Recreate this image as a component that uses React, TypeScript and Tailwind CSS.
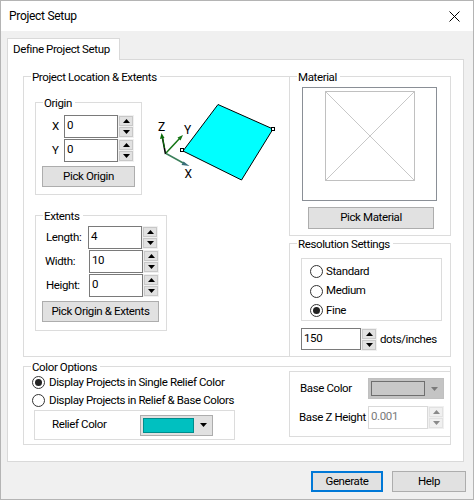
import React from "react";

function Group({
  label,
  className,
  children,
}: {
  label: string;
  className: string;
  children?: React.ReactNode;
}) {
  return (
    <div className={`relative border-[#dcdcdc] ${className}`}>
      <span className="absolute top-[-8px] left-[7px] bg-white pl-[1px] pr-[3px] leading-[16px] whitespace-nowrap">
        {label}
      </span>
      {children}
    </div>
  );
}

function Arrow({ dir = "up", color = "#000" }: { dir?: "up" | "down"; color?: string }) {
  return (
    <svg width="7" height="4" viewBox="0 0 7 4" className="block">
      <polygon points={dir === "up" ? "3.5,0 7,4 0,4" : "0,0 7,0 3.5,4"} fill={color} />
    </svg>
  );
}

function Spin({ disabled = false }: { disabled?: boolean }) {
  const color = disabled ? "#8a8a8a" : "#000";
  const cls = disabled
    ? "flex h-[10px] w-[14px] items-center justify-center border border-[#e2e2e2] bg-[#f0f0f0]"
    : "flex h-[10px] w-[14px] items-center justify-center border border-[#c8c8c8] bg-[#e1e1e1]";
  return (
    <div className="flex flex-col gap-[1px] bg-[#f0f0f0] p-[1px]">
      <div className={cls}>
        <Arrow dir="up" color={color} />
      </div>
      <div className={cls}>
        <Arrow dir="down" color={color} />
      </div>
    </div>
  );
}

function Field({
  value,
  className,
  disabled = false,
}: {
  value: string;
  className: string;
  disabled?: boolean;
}) {
  return (
    <div
      className={`border pl-[2px] leading-[18px] ${
        disabled ? "border-[#d9d9d9] text-[#7a7a7a]" : "border-[#7a7a7a]"
      } ${className}`}
    >
      {value}
    </div>
  );
}

function Btn({ label, className }: { label: string; className: string }) {
  return (
    <div
      className={`flex h-[21px] items-center justify-center border border-[#adadad] bg-[#e1e1e1] ${className}`}
    >
      {label}
    </div>
  );
}

function Radio({ checked = false }: { checked?: boolean }) {
  return (
    <span className="flex h-[13px] w-[13px] shrink-0 items-center justify-center rounded-full border border-[#333] bg-white">
      {checked && <span className="h-[7px] w-[7px] rounded-full bg-[#222]" />}
    </span>
  );
}

function Swatch({
  color,
  edge,
  className,
  arrow,
  inner,
}: {
  color: string;
  edge: string;
  className: string;
  arrow: string;
  inner: string;
}) {
  return (
    <div className={`flex h-[21px] items-center border border-[#adadad] pl-[2px] ${className}`}>
      <div className={`h-[15px] border ${inner}`} style={{ backgroundColor: color, borderColor: edge }} />
      <div className="flex flex-1 justify-center">
        <Arrow dir="down" color={arrow} />
      </div>
    </div>
  );
}

function Axes() {
  return (
    <svg width="130" height="92" viewBox="150 100 130 92" className="absolute left-[126px] top-[23px]">
      <polygon points="183,151 218,104.5 273,129 241.5,180" fill="#00ffff" stroke="#000" strokeWidth="1" />
      <rect x="180.5" y="148.5" width="3" height="3" fill="#fff" stroke="#000" />
      <rect x="271.5" y="127.5" width="3" height="3" fill="#fff" stroke="#000" />
      <g fill="none">
        <path d="M165.5 154 L162.5 138" stroke="#000" strokeWidth="1.5" />
        <path d="M164.5 148 L162.5 138" stroke="#0a7a0a" strokeWidth="1" />
        <path d="M166 153 L180 138" stroke="#157515" strokeWidth="1.5" />
        <path d="M166 153.5 L185 164" stroke="#3a7f5a" strokeWidth="1.5" />
      </g>
      <polygon points="161.5,133 160,139 164.5,138" fill="#0a6a0a" />
      <polygon points="183,135 177.5,137.5 180.5,140.5" fill="#157515" />
      <polygon points="189.5,166 183.5,161.5 181.5,165" fill="#3a6f7a" />
      <text x="158" y="131" fontSize="12" fontFamily="Roboto, sans-serif">Z</text>
      <text x="184" y="134" fontSize="12" fontFamily="Roboto, sans-serif">Y</text>
      <text x="184.5" y="178" fontSize="12" fontFamily="Roboto, sans-serif">X</text>
    </svg>
  );
}

function MaterialPreview() {
  return (
    <svg width="90" height="90" viewBox="0 0 90 90" className="block">
      <rect x="0.5" y="0.5" width="89" height="89" fill="#fff" stroke="#c0c0c0" />
      <path d="M0.5 0.5 L89.5 89.5 M89.5 0.5 L0.5 89.5" stroke="#c8c8c8" fill="none" />
    </svg>
  );
}

export default function App() {
  return (
    <div className="flex h-[500px] w-[474px] flex-col border border-[#b4b4b4] bg-[#f0f0f0] font-['Roboto',sans-serif] text-[11.5px] tracking-[-0.38px] text-black">
      <div className="flex h-[30px] items-center justify-between bg-white pl-[8px] pr-[13px] text-[12px] tracking-[-0.3px]">
        <span>Project Setup</span>
        <svg width="11" height="11" viewBox="0 0 11 11">
          <path d="M0.5 0.5 L10.5 10.5 M10.5 0.5 L0.5 10.5" stroke="#000" fill="none" />
        </svg>
      </div>

      <div className="pl-[6px] pt-[7px]">
        <div className="relative z-10 -mb-px flex h-[22px] w-[113px] items-center whitespace-nowrap border border-b-0 border-[#d9d9d9] bg-white pl-[5px]">
          Define Project Setup
        </div>
        <div className="h-[403px] w-[457px] border border-[#d9d9d9] bg-white pl-[15px] pt-[16px]">
          <div className="flex">
            <Group
              label="Project Location & Extents"
              className="h-[281px] w-[266px] border-b border-l border-t pl-[11px] pt-[25px]"
            >
              <Group label="Origin" className="h-[93px] w-[107px] border pl-[6px] pt-[12px]">
                <div className="flex items-center">
                  <span className="w-[22px] pl-[10px]">X</span>
                  <Field value="0" className="h-[23px] w-[54px]" />
                  <Spin />
                </div>
                <div className="mt-px flex items-center">
                  <span className="w-[22px] pl-[10px]">Y</span>
                  <Field value="0" className="h-[23px] w-[54px]" />
                  <Spin />
                </div>
                <Btn label="Pick Origin" className="mt-[4px] w-[93px]" />
              </Group>
              <Axes />
              <Group label="Extents" className="mt-[20px] h-[116px] w-[132px] border pl-[6px] pt-[10px]">
                <div className="flex items-center">
                  <span className="w-[46px] pl-[4px]">Length:</span>
                  <Field value="4" className="h-[23px] w-[54px]" />
                  <Spin />
                </div>
                <div className="mt-px flex items-center">
                  <span className="w-[47px] pl-[3px]">Width:</span>
                  <Field value="10" className="h-[23px] w-[54px]" />
                  <Spin />
                </div>
                <div className="mt-px flex items-center">
                  <span className="w-[47px] pl-[4px]">Height:</span>
                  <Field value="0" className="h-[23px] w-[54px]" />
                  <Spin />
                </div>
                <Btn label="Pick Origin & Extents" className="mt-[4px] w-[117px]" />
              </Group>
            </Group>

            <div className="flex w-[162px] flex-col">
              <Group label="Material" className="h-[160px] border pl-[12px] pt-[10px]">
                <div className="flex h-[114px] w-[135px] items-start justify-center border border-[#8a8f96] pt-[3px]">
                  <MaterialPreview />
                </div>
                <Btn label="Pick Material" className="ml-[6px] mt-[6px] h-[22px] w-[126px]" />
              </Group>
              <Group label="Resolution Settings" className="mt-[7px] h-[114px] border pl-[11px] pt-[14px]">
                <div className="flex h-[63px] w-[141px] flex-col gap-[6.5px] border border-[#dcdcdc] pl-[8px] pt-[6px]">
                  <div className="flex h-[13px] items-center gap-[3px]"><Radio />Standard</div>
                  <div className="flex h-[13px] items-center gap-[3px]"><Radio />Medium</div>
                  <div className="flex h-[13px] items-center gap-[3px]"><Radio checked />Fine</div>
                </div>
                <div className="mt-[7px] flex items-start">
                  <Field value="150" className="h-[22px] w-[60px]" />
                  <Spin />
                  <span className="ml-[3px] mt-[3px]">dots/inches</span>
                </div>
              </Group>
            </div>
          </div>

          <Group
            label="Color Options"
            className="mt-[9px] flex h-[79px] w-[428px] border pl-[10px]"
          >
            <div className="w-[255px] pt-[9px]">
              <div className="-ml-[2px] flex h-[13px] items-center gap-[4px]"><Radio checked />Display Projects in Single Relief Color</div>
              <div className="-ml-[2px] mt-[5px] flex h-[13px] items-center gap-[4px]"><Radio />Display Projects in Relief &amp; Base Colors</div>
              <div className="mt-[3px] flex h-[30px] w-[201px] items-center border border-[#dcdcdc] pl-[17px]">
                <span className="w-[88px]">Relief Color</span>
                <Swatch color="#00c0c0" edge="#008c8c" className="w-[73px] bg-[#e1e1e1]" arrow="#000" inner="w-[51px]" />
              </div>
            </div>
            <div className="mt-[4px] h-[66px] w-[161px] border-y border-l border-[#dcdcdc] pl-[9px] pt-[6px]">
              <div className="flex items-center">
                <span className="w-[69px] pl-px">Base Color</span>
                <Swatch color="#c8c8c8" edge="#6f6f6f" className="w-[76px] border-[#c0c0c0] bg-[#c4c4c4]" arrow="#7a7a7a" inner="w-[54px]" />
              </div>
              <div className="mt-[7px] flex items-center">
                <span className="w-[69px] whitespace-nowrap">Base Z Height</span>
                <Field value="0.001" disabled className="h-[23px] w-[60px]" />
                <Spin disabled />
              </div>
            </div>
          </Group>
        </div>
      </div>

      <div className="mt-[9px] flex justify-end gap-[9px] pr-[7px]">
        <div className="flex h-[21px] w-[72px] items-center justify-center border-2 border-[#0078d7] bg-[#e1e1e1]">
          Generate
        </div>
        <Btn label="Help" className="w-[74px]" />
      </div>
    </div>
  );
}
